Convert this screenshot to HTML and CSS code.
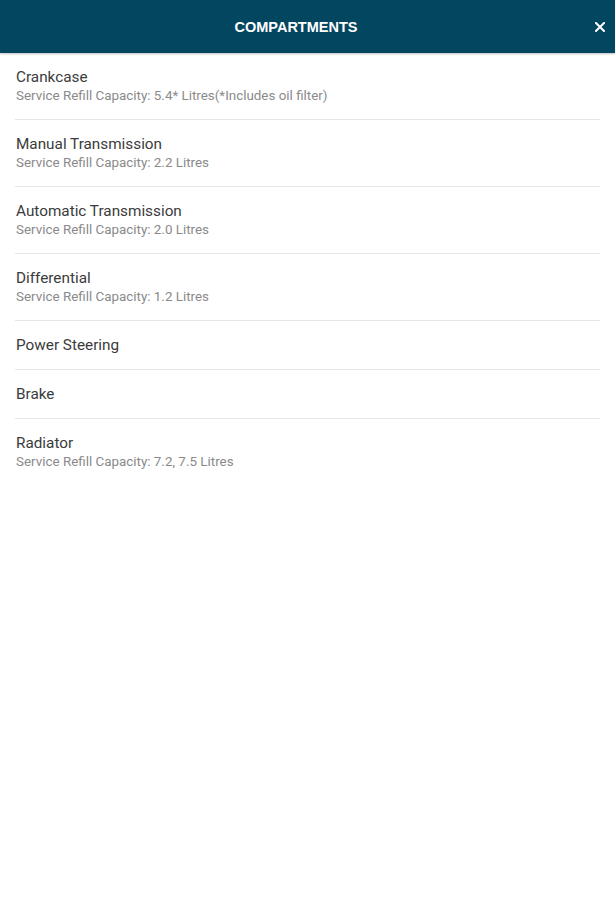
FILE: index.html
```html
<!DOCTYPE html>
<html>
<head>
<meta charset="utf-8">
<link rel="stylesheet" href="styles.css">
</head>
<body>
<header class="topbar">
  <div class="title">COMPARTMENTS</div>
  <button class="close" aria-label="Close">
    <svg width="10" height="10" viewBox="0 0 10 10"><path d="M1 1 L9 9 M9 1 L1 9" stroke="#fff" stroke-width="2" stroke-linecap="square"/></svg>
  </button>
</header>
<ul class="list">
  <li class="item"><div class="name">Crankcase</div><div class="sub">Service Refill Capacity: 5.4* Litres(*Includes oil filter)</div></li>
  <li class="item"><div class="name">Manual Transmission</div><div class="sub">Service Refill Capacity: 2.2 Litres</div></li>
  <li class="item"><div class="name">Automatic Transmission</div><div class="sub">Service Refill Capacity: 2.0 Litres</div></li>
  <li class="item"><div class="name">Differential</div><div class="sub">Service Refill Capacity: 1.2 Litres</div></li>
  <li class="item"><div class="name">Power Steering</div></li>
  <li class="item"><div class="name">Brake</div></li>
  <li class="item last"><div class="name">Radiator</div><div class="sub">Service Refill Capacity: 7.2, 7.5 Litres</div></li>
</ul>
</body>
</html>
```
FILE: styles.css
```css
html, body { margin: 0; padding: 0; background: #fff; }
body { font-family: Roboto, "Liberation Sans", sans-serif; }
.topbar {
  height: 53px;
  background: #03465f;
  display: flex;
  align-items: center;
  box-shadow: 0 1px 2px rgba(0,0,0,0.25);
  position: relative;
}
.title {
  flex: 1;
  text-align: center;
  color: #fff;
  font-family: "Liberation Sans", Arial, sans-serif;
  font-weight: bold;
  font-size: 14.5px;
}
.close {
  width: 16px;
  margin-right: 7px;
  padding: 0;
  border: 0;
  background: none;
  display: flex;
  justify-content: center;
  align-items: center;
  height: 20px;
}
.list { list-style: none; margin: 0; padding: 0 15px; }
.item {
  padding: 14px 1px 14px;
  border-bottom: 1px solid #e6e6e6;
}
.item.last { border-bottom: 0; }
.name { font-size: 15.3px; line-height: 20px; color: #3b3b3b; }
.sub { font-size: 13.4px; line-height: 18px; color: #8a8a8a; }
```
